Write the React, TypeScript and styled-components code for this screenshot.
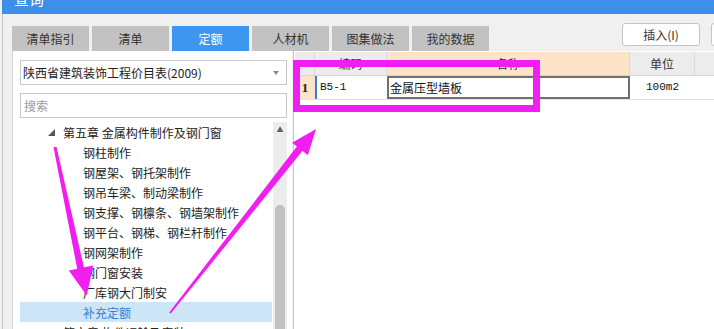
import React from "react";
import styled, { createGlobalStyle } from "styled-components";

const GlobalStyle = createGlobalStyle`
  html, body {
    margin: 0;
    padding: 0;
    background: #f0f0f0;
  }
  body {
    font-family: "Noto Sans CJK SC", "Microsoft YaHei", sans-serif;
    font-size: 12px;
    color: #333;
  }
`;

const Window = styled.div`
  position: relative;
  width: 714px;
  height: 329px;
  overflow: hidden;
  background: #f0f0f0;
  display: flex;
  flex-direction: column;
`;

const TitleBar = styled.div`
  flex: none;
  height: 14px;
  margin-left: 2px;
  background: #3d8fe9;
  overflow: hidden;
`;

const TitleText = styled.div`
  color: #fff;
  font-size: 15px;
  line-height: 15px;
  margin: -9px 0 0 12px;
`;

const Frame = styled.div`
  flex: 1;
  min-height: 0;
  margin-left: 2px;
  padding-left: 9px;
  border-left: 1px solid #c9c9c9;
  display: flex;
  flex-direction: column;
`;

const TopRow = styled.div`
  flex: none;
  height: 37px;
  display: flex;
  align-items: flex-end;
`;

const Tabs = styled.div`
  display: flex;
  gap: 3px;
`;

const Tab = styled.div<{ $active?: boolean }>`
  width: 77px;
  height: 25px;
  line-height: 25px;
  text-align: center;
  font-size: 12px;
  background: ${(p) => (p.$active ? "#3d97f1" : "#c2c2c2")};
  color: ${(p) => (p.$active ? "#fff" : "#333")};
`;

const Buttons = styled.div`
  display: flex;
  gap: 11px;
  margin-left: 133px;
  align-self: flex-start;
  margin-top: 9px;
  flex: none;
`;

const Button = styled.button`
  flex: none;
  width: 78px;
  height: 23px;
  padding: 0;
  background: #fff;
  border: 1px solid #c4c4c4;
  border-radius: 3px;
  font-family: inherit;
  font-size: 12px;
  color: #333;
`;

const Content = styled.div`
  flex: 1;
  min-height: 0;
  display: flex;
`;

const LeftPanel = styled.div`
  flex: none;
  width: 280px;
  box-sizing: border-box;
  padding: 9px 5px 0 7px;
  border-left: 1px solid #d2d2d2;
  background: #fff;
  display: flex;
  flex-direction: column;
`;

const Select = styled.div`
  flex: none;
  height: 25px;
  box-sizing: border-box;
  border: 1px solid #c8c8c8;
  display: flex;
  align-items: center;
  justify-content: space-between;
  padding: 0 7px 0 2px;
  font-size: 12px;
  color: #222;
`;

const Caret = styled.svg`
  width: 6px;
  height: 4px;
`;

const Search = styled.div`
  flex: none;
  margin-top: 8px;
  height: 25px;
  box-sizing: border-box;
  border: 1px solid #c8c8c8;
  padding-left: 3px;
  line-height: 23px;
  color: #9a9a9a;
`;

const TreeArea = styled.div`
  flex: 1;
  min-height: 0;
  margin-top: 4px;
  display: flex;
  overflow: hidden;
`;

const TreeList = styled.div`
  flex: 1;
  margin-right: 1px;
`;

const TreeRow = styled.div<{ $level: number; $selected?: boolean }>`
  height: 20px;
  display: flex;
  align-items: center;
  padding-left: ${(p) => (p.$level === 0 ? 28 : 63)}px;
  white-space: nowrap;
  font-size: 12px;
  background: ${(p) => (p.$selected ? "#cce6f8" : "transparent")};
  color: ${(p) => (p.$selected ? "#3a7dd2" : "#222")};
`;

const Expander = styled.svg`
  flex: none;
  width: 7px;
  height: 7px;
  margin-right: 8px;
`;

const ScrollTrack = styled.div`
  flex: none;
  width: 14px;
  background: #ececec;
  display: flex;
  flex-direction: column;
  align-items: center;
`;

const ScrollArrow = styled.div`
  height: 14px;
  line-height: 14px;
  font-size: 7px;
  color: #606060;
`;

const ScrollThumb = styled.div`
  margin-top: 69px;
  width: 10px;
  flex: 1;
  background: #c1c1c1;
  border-radius: 5px 5px 0 0;
`;

const RightPanel = styled.div`
  flex: 1;
  margin-left: 1px;
  border-left: 1px solid #c6c6c6;
  background: #fff;
  padding: 1px 0 0 1px;
`;

const GridRow = styled.div<{ $header?: boolean }>`
  display: grid;
  grid-template-columns: 20px 72px 243px 65px 100px;
  height: 23px;
  border-bottom: 1px solid ${(p) => (p.$header ? "#d4d4d4" : "#e2e2e2")};
`;

const HeadCell = styled.div<{ $accent?: boolean }>`
  background: ${(p) => (p.$accent ? "#fde4c8" : "#ececec")};
  border-right: 1px solid #dadada;
  text-align: center;
  line-height: 23px;
  font-size: 12px;
  color: #333;
`;

const RowNum = styled.div`
  background: #fde4c8;
  text-align: center;
  line-height: 23px;
  font-family: "Liberation Serif", serif;
  font-weight: bold;
  font-size: 13px;
  color: #222;
`;

const Cell = styled.div<{ $focus?: boolean; $editing?: boolean; $center?: boolean; $mono?: boolean }>`
  box-sizing: border-box;
  line-height: 23px;
  padding-left: ${(p) => (p.$center ? 0 : 3)}px;
  text-align: ${(p) => (p.$center ? "center" : "left")};
  border-left: ${(p) => (p.$focus ? "2px solid #3d7bd6" : "none")};
  box-shadow: ${(p) => (p.$editing ? "inset 0 0 0 2px #707070" : "none")};
  font-family: ${(p) =>
    p.$mono ? '"Liberation Mono", monospace' : '"Noto Sans CJK SC", sans-serif'};
  font-size: ${(p) => (p.$mono ? 11 : 12)}px;
  color: #111;
`;

const Overlay = styled.svg`
  position: absolute;
  left: 0;
  top: 0;
  width: 714px;
  height: 329px;
  pointer-events: none;
`;

const tabs = ["清单指引", "清单", "定额", "人材机", "图集做法", "我的数据"];

const children = [
  "钢柱制作",
  "钢屋架、钢托架制作",
  "钢吊车梁、制动梁制作",
  "钢支撑、钢檩条、钢墙架制作",
  "钢平台、钢梯、钢栏杆制作",
  "钢网架制作",
  "钢门窗安装",
  "厂库钢大门制安",
  "补充定额",
];

const MARK = "#f01ef0";

export default function App() {
  return (
    <Window>
      <GlobalStyle />
      <TitleBar>
        <TitleText>查询</TitleText>
      </TitleBar>
      <Frame>
        <TopRow>
          <Tabs>
            {tabs.map((t) => (
              <Tab key={t} $active={t === "定额"}>
                {t}
              </Tab>
            ))}
          </Tabs>
          <Buttons>
            <Button>插入(I)</Button>
            <Button>替换(R)</Button>
          </Buttons>
        </TopRow>
        <Content>
          <LeftPanel>
            <Select>
              <span>陕西省建筑装饰工程价目表(2009)</span>
              <Caret viewBox="0 0 6 4">
                <polygon points="0,0 6,0 3,4" fill="#8a8a8a" />
              </Caret>
            </Select>
            <Search>搜索</Search>
            <TreeArea>
              <TreeList>
                <TreeRow $level={0}>
                  <Expander viewBox="0 0 7 7">
                    <polygon points="7,0 7,7 0,7" fill="#555" />
                  </Expander>
                  第五章 金属构件制作及钢门窗
                </TreeRow>
                {children.map((c) => (
                  <TreeRow key={c} $level={1} $selected={c === "补充定额"}>
                    {c}
                  </TreeRow>
                ))}
                <TreeRow $level={0}>
                  <Expander viewBox="0 0 7 7">
                    <polygon points="0,0 6,3.5 0,7" fill="none" stroke="#777" />
                  </Expander>
                  第六章 构件运输及安装
                </TreeRow>
              </TreeList>
              <ScrollTrack>
                <ScrollArrow>▲</ScrollArrow>
                <ScrollThumb />
              </ScrollTrack>
            </TreeArea>
          </LeftPanel>
          <RightPanel>
            <GridRow $header>
              <HeadCell />
              <HeadCell>编码</HeadCell>
              <HeadCell $accent>名称</HeadCell>
              <HeadCell>单位</HeadCell>
              <HeadCell />
            </GridRow>
            <GridRow>
              <RowNum>1</RowNum>
              <Cell $focus $mono>
                B5-1
              </Cell>
              <Cell $editing>金属压型墙板</Cell>
              <Cell $center $mono>
                100m2
              </Cell>
              <Cell />
            </GridRow>
          </RightPanel>
        </Content>
      </Frame>
      <Overlay viewBox="0 0 714 329">
        <rect x="296.5" y="63.5" width="240" height="45" fill="none" stroke={MARK} strokeWidth="7" />
        <polygon points="56.5,146.7 53.5,147.3 77.6,270.7 84.4,269.3" fill={MARK} />
        <polygon points="93.2,265.4 68.8,270.6 86.8,295.4" fill={MARK} />
        <polygon points="170.8,313.6 169.2,312.4 298.2,144.8 303.8,149.2" fill={MARK} />
        <polygon points="307.9,155.2 292.1,142.8 316,129" fill={MARK} />
      </Overlay>
    </Window>
  );
}
